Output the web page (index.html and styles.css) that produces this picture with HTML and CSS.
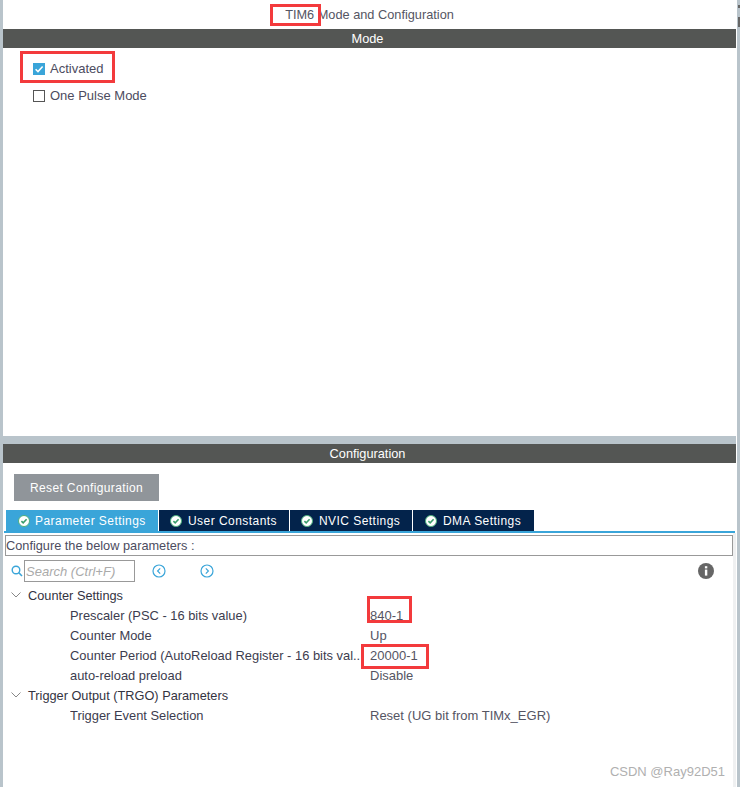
FILE: index.html
```html
<!DOCTYPE html>
<html lang="en">
<head>
<meta charset="utf-8">
<title>TIM6 Mode and Configuration</title>
<link rel="stylesheet" href="styles.css">
</head>
<body>
<main class="page">
  <header class="title"><span class="mark mark-title"></span>TIM6 Mode and Configuration</header>
  <section class="mode">
    <h2 class="bar">Mode</h2>
    <div class="mode-body">
      <label class="check-row"><span class="mark mark-activated"></span><span class="box box-on"><svg viewBox="0 0 12 12" width="12" height="12"><path d="M2.6 6.2 5 8.6 9.6 3.4" fill="none" stroke="#fff" stroke-width="1.5"/></svg></span>Activated</label>
      <label class="check-row"><span class="box"></span>One Pulse Mode</label>
    </div>
  </section>
  <div class="divider"></div>
  <section class="config">
    <h2 class="bar">Configuration</h2>
    <button class="reset">Reset Configuration</button>
    <nav class="tabs">
      <div class="tab tab-active"><svg class="ok" viewBox="0 0 12 12"><circle cx="6" cy="6" r="5.5" fill="#fff"/><circle cx="6" cy="6" r="5.5" fill="none" stroke="#4caf7d" stroke-width="1"/><path d="M3.4 6.1 5.2 7.9 8.6 4.3" fill="none" stroke="#3a9d6b" stroke-width="1.6"/></svg>Parameter Settings</div>
      <div class="tab tab-user"><svg class="ok" viewBox="0 0 12 12"><circle cx="6" cy="6" r="5.5" fill="#fff"/><circle cx="6" cy="6" r="5.5" fill="none" stroke="#4caf7d" stroke-width="1"/><path d="M3.4 6.1 5.2 7.9 8.6 4.3" fill="none" stroke="#3a9d6b" stroke-width="1.6"/></svg>User Constants</div>
      <div class="tab tab-nvic"><svg class="ok" viewBox="0 0 12 12"><circle cx="6" cy="6" r="5.5" fill="#fff"/><circle cx="6" cy="6" r="5.5" fill="none" stroke="#4caf7d" stroke-width="1"/><path d="M3.4 6.1 5.2 7.9 8.6 4.3" fill="none" stroke="#3a9d6b" stroke-width="1.6"/></svg>NVIC Settings</div>
      <div class="tab tab-dma"><svg class="ok" viewBox="0 0 12 12"><circle cx="6" cy="6" r="5.5" fill="#fff"/><circle cx="6" cy="6" r="5.5" fill="none" stroke="#4caf7d" stroke-width="1"/><path d="M3.4 6.1 5.2 7.9 8.6 4.3" fill="none" stroke="#3a9d6b" stroke-width="1.6"/></svg>DMA Settings</div>
    </nav>
    <div class="hint">Configure the below parameters :</div>
    <div class="tools">
      <svg class="search-icon" viewBox="0 0 12 12"><circle cx="5" cy="5" r="3.8" fill="none" stroke="#3aa5d9" stroke-width="1.4"/><path d="M7.800 7.800 11 11" stroke="#3aa5d9" stroke-width="1.6"/></svg>
      <div class="search">Search (Ctrl+F)</div>
      <svg class="nav nav-prev" viewBox="0 0 14 14"><circle cx="7" cy="7" r="6" fill="none" stroke="#3aa5d9" stroke-width="1.2"/><path d="M8.2 4.4 5.6 7 8.2 9.6" fill="none" stroke="#3aa5d9" stroke-width="1.2"/></svg>
      <svg class="nav nav-next" viewBox="0 0 14 14"><circle cx="7" cy="7" r="6" fill="none" stroke="#3aa5d9" stroke-width="1.2"/><path d="M5.8 4.4 8.4 7 5.8 9.6" fill="none" stroke="#3aa5d9" stroke-width="1.2"/></svg>
      <svg class="info" viewBox="0 0 16 16"><circle cx="8" cy="8" r="8" fill="#666"/><rect x="6.900" y="6.600" width="2.400" height="6" fill="#fff"/><rect x="6.900" y="3.200" width="2.400" height="2.200" fill="#fff"/></svg>
    </div>
    <div class="tree">
      <div class="group"><svg class="chev" viewBox="0 0 10 6"><path d="M.5.5 5 5 9.500.5" fill="none" stroke="#888" stroke-width="1"/></svg>Counter Settings</div>
      <div class="param"><span class="name">Prescaler (PSC - 16 bits value)</span><span class="val">840-1<span class="mark mark-psc"></span></span></div>
      <div class="param"><span class="name">Counter Mode</span><span class="val">Up</span></div>
      <div class="param"><span class="name">Counter Period (AutoReload Register - 16 bits val..</span><span class="val">20000-1<span class="mark mark-arr"></span></span></div>
      <div class="param"><span class="name">auto-reload preload</span><span class="val">Disable</span></div>
      <div class="group"><svg class="chev" viewBox="0 0 10 6"><path d="M.5.5 5 5 9.500.5" fill="none" stroke="#888" stroke-width="1"/></svg>Trigger Output (TRGO) Parameters</div>
      <div class="param"><span class="name">Trigger Event Selection</span><span class="val">Reset (UG bit from TIMx_EGR)</span></div>
    </div>
    <div class="watermark">CSDN @Ray92D51</div>
  </section>
</main>
</body>
</html>
```
FILE: styles.css
```css
* { box-sizing: border-box; }
html, body { margin: 0; padding: 0; height: 100%; }
body { background: #fff; font-family: "Liberation Sans", Arial, sans-serif; font-size: 13px; color: #3c3c4e; overflow: hidden; }
.page { width: 740px; height: 787px; padding-left: 3px; padding-right: 1px; background: #fff; border-right: 3px solid #b9c4cb; display: flex; flex-direction: column; position: relative; }
.page::before { content: ""; position: absolute; left: 0; top: 0; bottom: 0; width: 3px; background: #b9c4cb; }
.page::after { content: ""; position: absolute; right: -3px; top: 0; width: 2px; height: 30px; background: linear-gradient(to bottom, transparent 5px, #666 5px, #666 8px, transparent 8px, transparent 17px, #666 17px, #666 27px, transparent 27px); }
.title { height: 29px; line-height: 30px; text-align: center; position: relative; font-size: 12.75px; color: #555563; }
.bar { margin: 0; height: 19px; line-height: 19px; padding-right: 4px; background: #545654; color: #fff; font-size: 12.75px; font-weight: 400; text-align: center; }
.mode { height: 407px; }
.mode-body { padding: 7px 0 0 30px; }
.check-row { display: flex; align-items: center; height: 27px; gap: 5px; position: relative; font-size: 13px; color: #4c4c60; }
.box { width: 12px; height: 12px; border: 1px solid #555; background: #fff; display: block; }
.box-on { border: 0; background: #3aa5d9; }
.box-on svg { display: block; }
.divider { height: 8px; background: #b9c4cb; }
.config { flex: 1; position: relative; }
.config::after { content: ""; position: absolute; right: 0; top: 89px; bottom: 0; width: 3px; background: #eff0f1; }
.reset { display: block; margin: 11px 0 0 11px; width: 145px; height: 27px; border: 0; background: #90959a; color: #fff; font: 12px "Liberation Sans", Arial, sans-serif; letter-spacing: .37px; }
.tabs { display: flex; gap: 1px; margin: 9px 0 0 1px; width: 731px; height: 23px; border-bottom: 2px solid #3aa5d9; padding-left: 2px; }
.tab { height: 21px; background: #03234b; color: #fff; display: flex; align-items: center; font-size: 12px; letter-spacing: .45px; flex: none; gap: 6px; padding-left: 11px; }
.tab-active { background: #3aa5d9; width: 152px; padding-left: 12px; gap: 5px; }
.tab-user { width: 130px; }
.tab-nvic { width: 122px; }
.tab-dma { width: 121px; padding-left: 12px; }
.ok { width: 12px; height: 12px; flex: none; }
.hint { margin: 2px 0 0 2px; width: 728px; height: 21px; border: 1px solid #999; line-height: 19px; font-size: 12.75px; color: #4c4c60; }
.tools { display: flex; align-items: center; height: 22px; margin-top: 4px; }
.search-icon { width: 12px; height: 12px; margin-left: 8px; flex: none; }
.search { width: 111px; height: 22px; margin-left: 1px; border: 1px solid #999; line-height: 21px; padding-left: 1px; font-style: italic; color: #aaa; }
.nav { width: 14px; height: 14px; flex: none; }
.nav-prev { margin-left: 17px; }
.nav-next { margin-left: 34px; }
.info { width: 16px; height: 16px; margin-left: auto; margin-right: 22px; }
.tree { margin-top: 3px; }
.group { height: 20px; display: flex; align-items: center; padding-left: 8px; gap: 7px; font-size: 12.75px; color: #33333f; }
.chev { width: 10px; height: 6px; flex: none; }
.param { height: 20px; display: flex; align-items: center; padding-left: 67px; }
.name { width: 300px; white-space: nowrap; overflow: hidden; font-size: 12.9px; color: #3c3c4e; }
.val { position: relative; color: #555563; }
.mark { position: absolute; border: 3px solid #f33a3c; pointer-events: none; }
.mark-title { left: 267px; top: 4px; width: 51px; height: 22px; }
.mark-activated { left: -13px; top: -4px; width: 95px; height: 32px; }
.mark-psc { left: -3px; top: -12px; width: 45px; height: 27px; }
.mark-arr { left: -9px; top: -4px; width: 68px; height: 25px; }
.watermark { position: absolute; right: 11px; bottom: 8px; font-size: 13px; color: #b0b0b0; }
```
